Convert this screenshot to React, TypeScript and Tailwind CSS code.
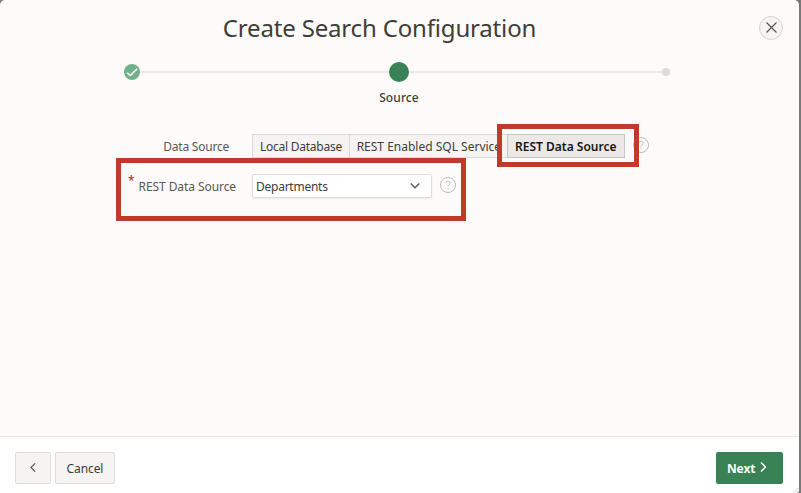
import React from "react";

function Help({ className = "" }: { className?: string }) {
  return (
    <svg className={`h-4 w-4 shrink-0 ${className}`} viewBox="0 0 16 16" fill="none" stroke="#bdbbb8">
      <circle cx="8" cy="8" r="7.5" />
      <path d="M5.900 6.200a2.100 2 0 1 1 3.200 1.700c-.8.5-1.100.8-1.100 1.500M8 10.800v1.100" />
    </svg>
  );
}

function Progress() {
  return (
    <div className="mx-[124px] mt-[14px]">
      <div className="flex h-5 items-center">
        <svg className="h-4 w-4 shrink-0" viewBox="0 0 16 16" fill="none">
          <circle cx="8" cy="8" r="8" fill="#73b08d" />
          <path d="M3.2 8.700l3.100 2.900 7-6.900" stroke="#fff" strokeWidth="1.4" />
        </svg>
        <div className="h-[2px] w-[249px] bg-[#ebe9e7]" />
        <div className="h-5 w-5 shrink-0 rounded-full bg-[#398255]" />
        <div className="h-[2px] w-[253px] bg-[#ebe9e7]" />
        <div className="h-2 w-2 shrink-0 rounded-full bg-[#dfdcda]" />
      </div>
      <div className="mt-2 w-[550px] text-center text-[12px] leading-4 font-medium tracking-[0.1px]">Source</div>
    </div>
  );
}

export default function App() {
  return (
    <div className="relative h-[493px] w-[801px] overflow-hidden bg-[#797979] pr-[2px] font-['Noto_Sans',sans-serif] text-[12px] text-[#403c38]">
      <div className="flex h-full flex-col overflow-hidden rounded-t-[5px] rounded-br-[3px] bg-[#fcfbfa]">
        <header className="flex h-12 shrink-0 items-start pr-4">
          <h1 className="flex-1 pt-[12px] pr-0 text-center text-[24px] leading-8 font-normal tracking-[-0.17px] whitespace-nowrap">
            Create Search Configuration
          </h1>
          <button className="mt-4 flex h-6 w-6 items-center justify-center rounded-full border border-[#d3d1cf] bg-[#f6f5f4]">
            <svg className="h-[11px] w-[11px] -translate-y-px" viewBox="0 0 11 11" stroke="#55514e" strokeWidth="1.1">
              <path d="M.5.5l10 10M10.500.5l-10 10" />
            </svg>
          </button>
        </header>

        <Progress />

        <main className="flex-1 pt-[28px]">
          <div className="flex h-6 items-center">
            <label className="w-[229px] pt-[2px] text-right text-[12px] tracking-[-0.22px] text-[#5a5652]">Data Source</label>
            <div className="ml-[23px] flex h-6 w-[373px] border border-[#dbd9d7] bg-[#f5f4f3] leading-[24px] whitespace-nowrap">
              <div className="w-[97px] border-r border-[#dbd9d7] pl-[7px] tracking-[-0.25px]">Local Database</div>
              <div className="w-[157px] overflow-hidden pl-[7px]">REST Enabled SQL Service</div>
              <div className="-my-px -mr-px ml-px h-6 w-[118px] shrink-0 border border-[#c7c4c1] bg-[#ebe8e6] pl-[7px] leading-[24px] font-semibold text-[#161513]">
                REST Data Source
              </div>
            </div>
            <Help className="ml-2 -translate-y-px" />
          </div>
          <div className="mt-4 flex h-6 items-center">
            <span className="ml-[128px] w-2 -translate-y-[5px] text-[12px] leading-none font-semibold text-[#c74634]">*</span>
            <label className="w-[100px] pt-[2px] text-right text-[12px] tracking-[-0.08px] whitespace-nowrap text-[#5a5652]">
              REST Data Source
            </label>
            <div className="ml-[16px] flex h-6 w-[180px] items-center justify-between rounded-[2px] border border-[#dfdddb] bg-white pr-[11px] pl-[3px] shadow-[0_1px_2px_rgba(0,0,0,0.07)]">
              <span className="pt-[2px] tracking-[-0.25px]">Departments</span>
              <svg className="h-[6px] w-[10px]" viewBox="0 0 10 6" fill="none" stroke="#55514e" strokeWidth="1.3">
                <path d="M.7.5L5 4.800 9.300.5" />
              </svg>
            </div>
            <Help className="ml-2 -translate-y-px" />
          </div>
        </main>

        <footer className="flex h-[57px] shrink-0 items-start border-t border-[#e8e6e4] bg-white pt-[15px] pl-[15px]">
          <button className="flex h-8 w-9 items-center justify-center rounded-[2px] border border-[#dedcda] bg-[#f5f4f3]">
            <svg className="h-[9px] w-[6px] -translate-y-px" viewBox="0 0 6 9" fill="none" stroke="#55514e" strokeWidth="1.1">
              <path d="M5.200.3L.9 4.500l4.300 4.200" />
            </svg>
          </button>
          <button className="ml-1 h-8 w-[60px] rounded-[2px] border border-[#dedcda] bg-[#f5f4f3] pt-[2px] tracking-[-0.1px]">
            Cancel
          </button>
          <button className="mr-4 ml-auto flex h-8 w-[67px] items-center rounded-[2px] bg-[#398255] pl-[11px] text-[12px] font-bold tracking-[-0.15px] text-white">
            <span className="pt-[2px]">Next</span>
            <svg className="ml-[5px] h-[10px] w-[7px] -translate-y-px" viewBox="0 0 7 10" fill="none" stroke="#fff" strokeWidth="1.4">
              <path d="M1 .5L5.500 5 1 9.500" />
            </svg>
          </button>
        </footer>
      </div>
      <svg className="absolute right-[2px] bottom-0 h-[5px] w-[5px]" viewBox="0 0 5 5" stroke="#c9c7c5">
        <path d="M0 4.500L4.500 0M3 4.500L4.500 3" />
      </svg>
      <div className="absolute top-[124px] left-[497px] h-[43px] w-[142px] border-5 border-[#bf3a29]" />
      <div className="absolute top-[158px] left-[116px] h-[63px] w-[350px] border-5 border-[#bf3a29]" />
    </div>
  );
}
